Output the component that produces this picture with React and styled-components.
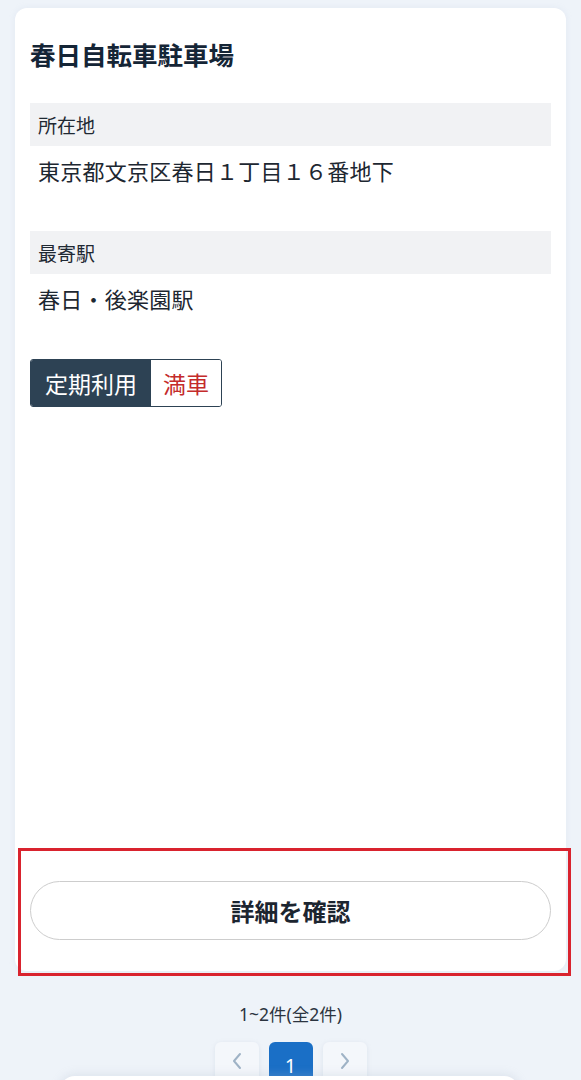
import React from "react";
import styled, { createGlobalStyle } from "styled-components";

const Global = createGlobalStyle`
  html, body { margin: 0; padding: 0; }
  body {
    background: #eef3f9;
    font-family: "Noto Sans CJK JP", "Noto Sans", sans-serif;
    color: #1f2933;
    overflow: hidden;
  }
  * { box-sizing: border-box; }
`;

const Page = styled.div`
  padding: 8px 15px 0;
  min-height: 1080px;
`;

const Card = styled.section`
  position: relative;
  background: #ffffff;
  border-radius: 12px;
  padding: 27px 15px 31px;
  display: flex;
  flex-direction: column;
  box-shadow: 0 0 6px rgba(180, 195, 215, 0.18);
`;

const Title = styled.h2`
  margin: 0 0 31px;
  font-size: 25.5px;
  line-height: 37px;
  font-weight: 700;
  color: #152536;
  font-family: "Noto Sans CJK JP", sans-serif;
`;

const Field = styled.div`
  display: flex;
  flex-direction: column;
  & + & { margin-top: 44px; }
`;

const Label = styled.div`
  height: 43px;
  display: flex;
  align-items: center;
  padding: 0 8px;
  background: #f1f2f4;
  font-size: 19px;
  color: #1f2933;
`;

const Value = styled.div`
  padding: 8px 8px 0;
  font-size: 22px;
  letter-spacing: 0.25px;
  line-height: 33px;
  color: #1d2731;
`;

const TagGroup = styled.div`
  margin-top: 44px;
  display: inline-flex;
  align-self: flex-start;
  height: 48px;
  border: 1px solid #2d4254;
  border-radius: 3px;
  overflow: hidden;
`;

const Tag = styled.span`
  display: flex;
  align-items: center;
  padding: 0 ${(p) => (p.$dark ? "14px" : "12px")};
  font-size: 23px;
  background: ${(p) => (p.$dark ? "#2d4254" : "#ffffff")};
  color: ${(p) => (p.$dark ? "#ffffff" : "#c42b2b")};
`;

const DetailButton = styled.button`
  margin-top: 474px;
  height: 59px;
  width: 100%;
  border-radius: 30px;
  border: 1px solid #cdcdcd;
  background: #ffffff;
  font-family: "Noto Sans CJK JP", sans-serif;
  font-size: 24px;
  font-weight: 700;
  color: #1c2530;
  cursor: pointer;
`;

const Highlight = styled.div`
  position: absolute;
  left: 3px;
  top: 840px;
  width: 553px;
  height: 128px;
  border: 3.5px solid #d9232e;
  pointer-events: none;
`;

const Count = styled.p`
  margin: 31px 0 0;
  text-align: center;
  font-family: "Noto Sans", "Noto Sans CJK JP", sans-serif;
  font-size: 17.5px;
  line-height: 25px;
  color: #2b3440;
`;

const Pager = styled.nav`
  margin-top: 15px;
  display: flex;
  justify-content: center;
  gap: 10px;
`;

const PageBtn = styled.button`
  width: 44px;
  height: 48px;
  border: none;
  border-radius: 6px;
  display: flex;
  justify-content: center;
  padding-top: 10px;
  font-family: "Noto Sans", sans-serif;
  font-size: 20px;
  background: ${(p) => (p.$active ? "#1a6fc6" : "#f4f7fb")};
  color: ${(p) => (p.$active ? "#ffffff" : "#9fb3c6")};
  box-shadow: ${(p) => (p.$active ? "none" : "0 1px 4px rgba(170,185,205,0.25)")};
`;

const BottomSheet = styled.div`
  position: fixed;
  left: 59px;
  right: 61px;
  top: 1076px;
  height: 80px;
  background: #ffffff;
  border-radius: 16px;
  box-shadow: 0 -2px 8px rgba(170, 185, 205, 0.25);
`;

const Chevron = ({ dir }) => (
  <svg width="12" height="18" viewBox="0 0 12 18" fill="none">
    <path
      d={dir === "left" ? "M9 2 L3 9 L9 16" : "M3 2 L9 9 L3 16"}
      stroke="currentColor"
      strokeWidth="2"
      strokeLinecap="round"
      strokeLinejoin="round"
    />
  </svg>
);

export default function App() {
  return (
    <>
      <Global />
      <Page>
        <Card>
          <Title>春日自転車駐車場</Title>
          <Field>
            <Label>所在地</Label>
            <Value>東京都文京区春日１丁目１６番地下</Value>
          </Field>
          <Field>
            <Label>最寄駅</Label>
            <Value>春日・後楽園駅</Value>
          </Field>
          <TagGroup>
            <Tag $dark>定期利用</Tag>
            <Tag>満車</Tag>
          </TagGroup>
          <DetailButton>詳細を確認</DetailButton>
          <Highlight />
        </Card>
        <Count>1~2件(全2件)</Count>
        <Pager>
          <PageBtn aria-label="前へ"><Chevron dir="left" /></PageBtn>
          <PageBtn $active>1</PageBtn>
          <PageBtn aria-label="次へ"><Chevron dir="right" /></PageBtn>
        </Pager>
      </Page>
      <BottomSheet />
    </>
  );
}
